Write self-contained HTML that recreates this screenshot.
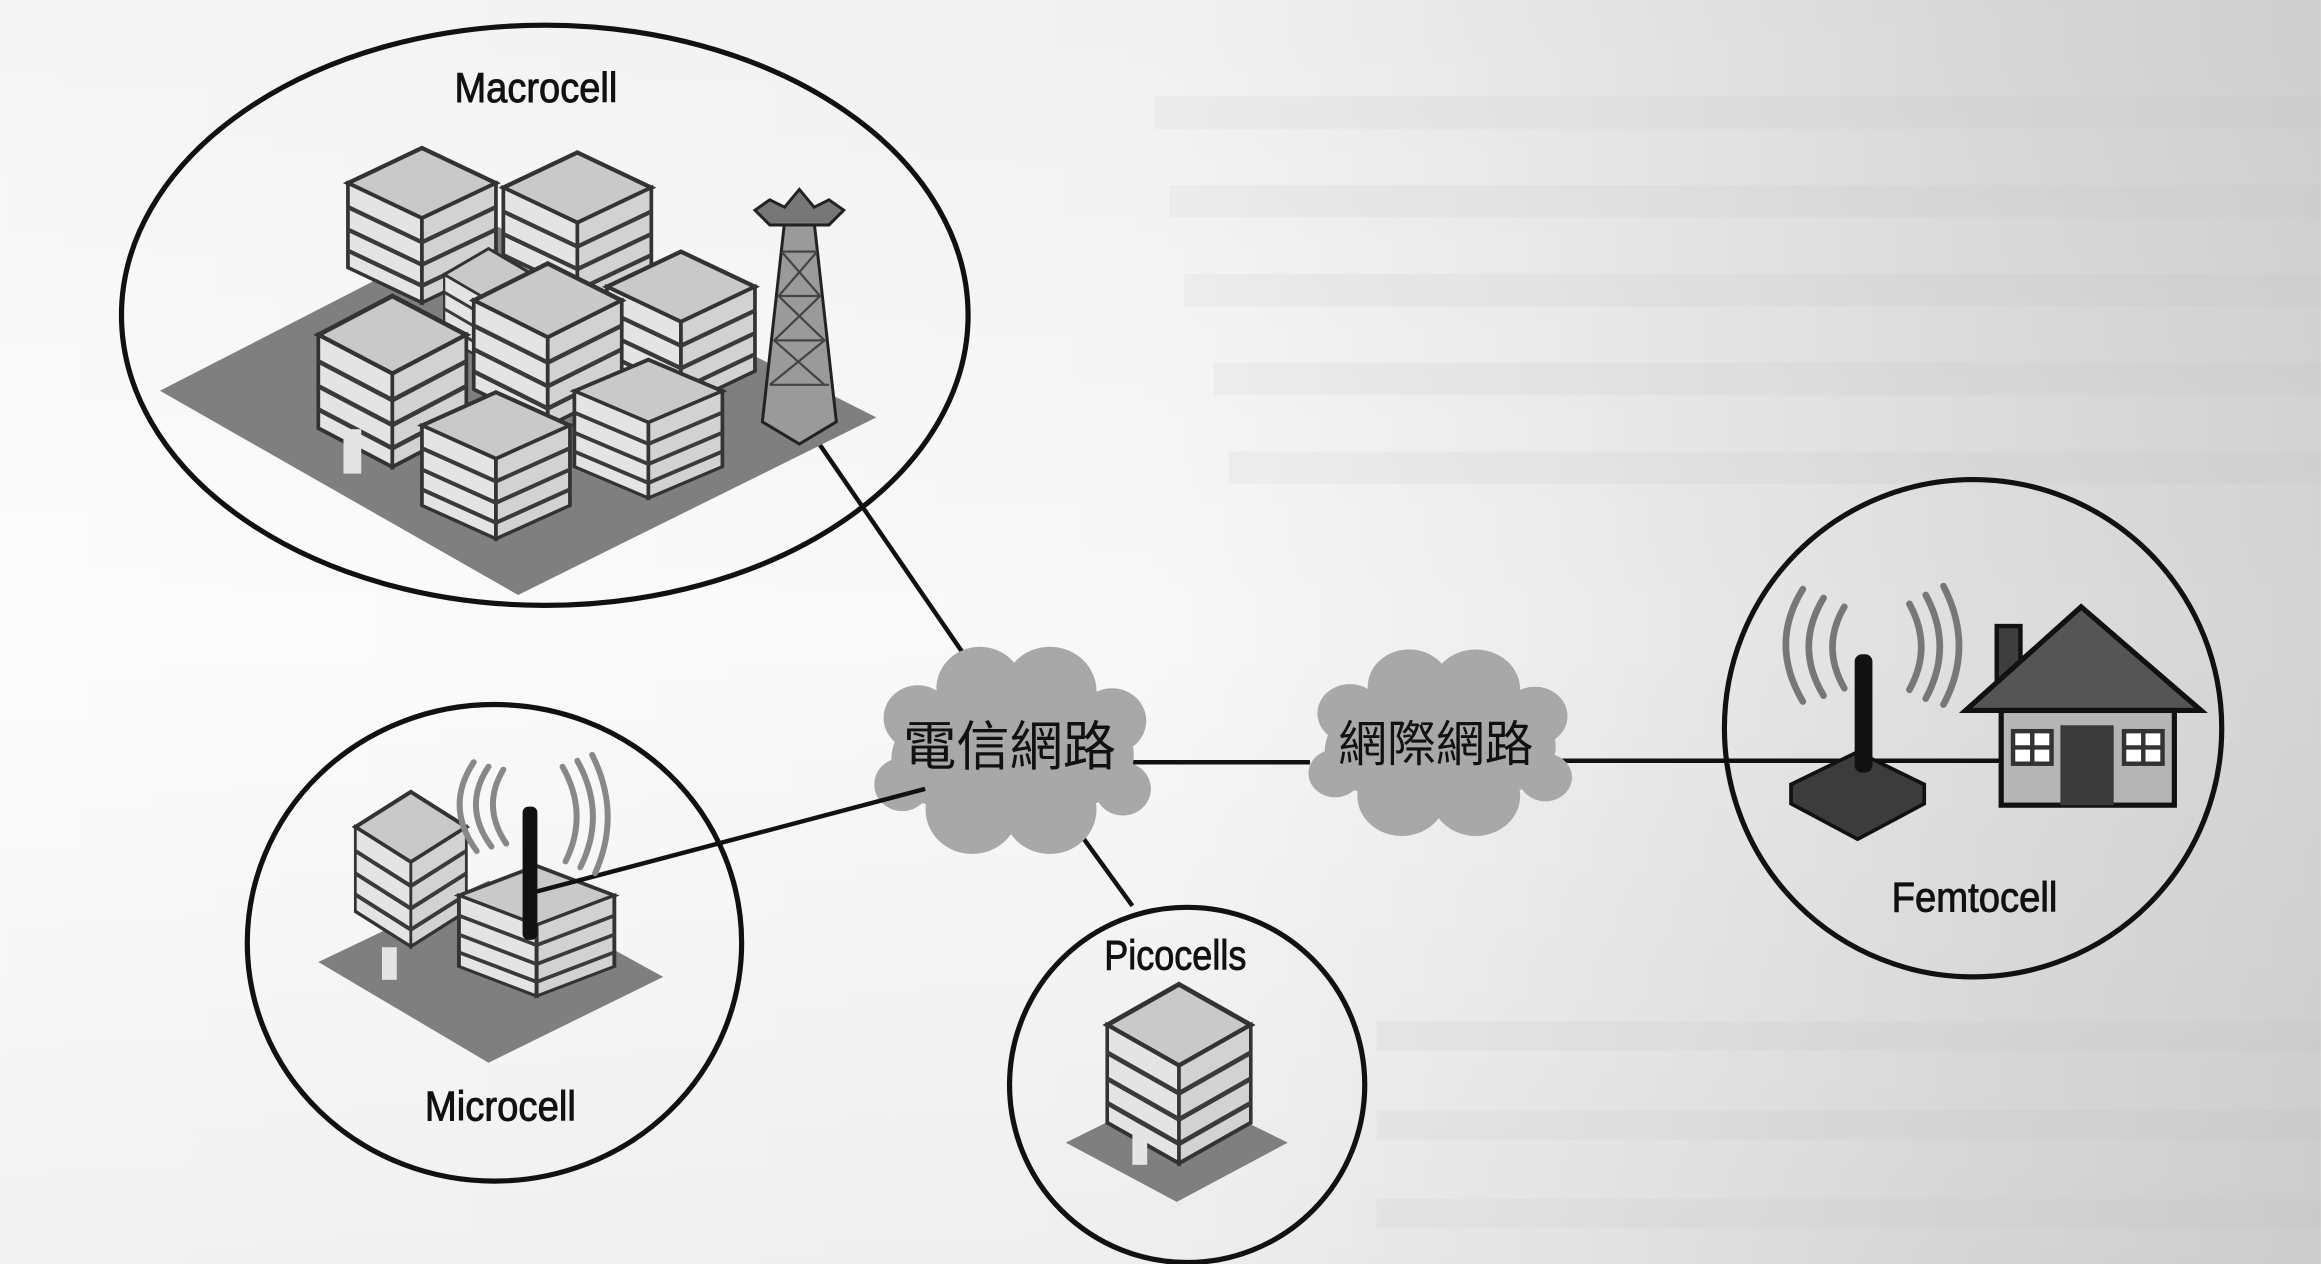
<!DOCTYPE html>
<html><head><meta charset="utf-8"><style>
html,body{margin:0;padding:0;width:2321px;height:1264px;overflow:hidden;background:#fff}
svg{display:block}
</style></head><body>
<svg width="2321" height="1264" viewBox="0 0 1568 854" xmlns="http://www.w3.org/2000/svg">
<defs>
<linearGradient id="bg" x1="0" y1="0" x2="1" y2="0">
<stop offset="0" stop-color="#fcfcfc"/><stop offset="0.5" stop-color="#f8f8f8"/>
<stop offset="0.68" stop-color="#ececec"/><stop offset="0.85" stop-color="#dedede"/><stop offset="1" stop-color="#d4d4d4"/>
</linearGradient>
<linearGradient id="bgv" x1="0" y1="0" x2="0" y2="1">
<stop offset="0" stop-color="#000" stop-opacity="0.03"/><stop offset="0.5" stop-color="#000" stop-opacity="0"/><stop offset="1" stop-color="#000" stop-opacity="0.04"/>
</linearGradient>
<g id="b">
<polygon points="50,0 100,25 50,50 0,25" fill="#c9c9c9" stroke="#333" stroke-width="3"/>
<polygon points="0,25 50,50 50,110 0,85" fill="#e4e4e4" stroke="#333" stroke-width="2.5"/>
<polygon points="50,50 100,25 100,85 50,110" fill="#d2d2d2" stroke="#333" stroke-width="2.5"/>
<g stroke="#3a3a3a" stroke-width="3">
<line x1="0" y1="42" x2="50" y2="67"/><line x1="0" y1="58" x2="50" y2="83"/><line x1="0" y1="73" x2="50" y2="98"/>
<line x1="50" y1="67" x2="100" y2="42"/><line x1="50" y1="83" x2="100" y2="58"/><line x1="50" y1="98" x2="100" y2="73"/>
</g>
</g>
<g id="cloud" fill="#a8a8a8">
<circle cx="0" cy="0" r="38"/><circle cx="-45" cy="8" r="32"/><circle cx="45" cy="5" r="34"/>
<circle cx="-20" cy="-40" r="28"/><circle cx="25" cy="-38" r="30"/><circle cx="-60" cy="-20" r="22"/><circle cx="65" cy="-18" r="22"/>
<circle cx="-25" cy="42" r="30"/><circle cx="25" cy="42" r="30"/><circle cx="-70" cy="25" r="18"/><circle cx="72" cy="28" r="18"/>
</g>
</defs>
<rect width="1568" height="854" fill="url(#bg)"/>
<rect width="1568" height="854" fill="url(#bgv)"/>
<g fill="#bbb" opacity="0.12">
<rect x="780" y="65" width="788" height="22"/><rect x="790" y="125" width="778" height="22"/><rect x="800" y="185" width="768" height="22"/>
<rect x="820" y="245" width="748" height="22"/><rect x="830" y="305" width="738" height="22"/>
<rect x="930" y="690" width="638" height="20"/><rect x="930" y="750" width="638" height="20"/><rect x="930" y="810" width="638" height="20"/>
</g>

<g stroke="#111" stroke-width="3" fill="none">
<line x1="548" y1="292" x2="660" y2="455"/>
<line x1="720" y1="550" x2="765" y2="612"/>
<line x1="760" y1="515" x2="885" y2="515"/>
<line x1="1050" y1="514" x2="1352" y2="514"/>
</g>

<!-- Macrocell -->
<ellipse cx="368" cy="213" rx="286" ry="196" fill="none" stroke="#111" stroke-width="3.5"/>
<text x="362" y="69" font-family="Liberation Sans, sans-serif" font-size="28" text-anchor="middle" textLength="110" lengthAdjust="spacingAndGlyphs" fill="#111" stroke="#111" stroke-width="0.6">Macrocell</text>
<polygon points="108,264 330,150 592,282 350,402" fill="#7f7f7f"/>
<use href="#b" transform="translate(235,100) scale(1,0.95)"/>
<use href="#b" transform="translate(340,103) scale(1,0.95)"/>
<use href="#b" transform="translate(300,168) scale(0.6,0.7)"/>
<use href="#b" transform="translate(410,170) scale(1,0.95)"/>
<use href="#b" transform="translate(320,178) scale(1,1.0)"/>
<use href="#b" transform="translate(215,200) scale(1,1.05)"/>
<use href="#b" transform="translate(388,243) scale(1,0.85)"/>
<use href="#b" transform="translate(285,265) scale(1,0.9)"/>
<rect x="232" y="290" width="12" height="30" fill="#e4e4e4"/>
<g stroke="#222" stroke-width="2" fill="#9a9a9a">
<polygon points="530,150 550,150 565,285 540,300 515,285"/>
<polygon points="510,142 520,135 530,140 540,128 550,140 560,135 570,142 560,152 520,152" fill="#777"/>
<path d="M528,170 L552,170 M526,200 L554,200 M523,230 L557,230 M520,260 L560,260 M528,170 L554,200 L523,230 L557,260 M552,170 L526,200 L557,230 L520,260" fill="none" stroke="#444" stroke-width="1.5"/>
</g>

<!-- Clouds -->
<use href="#cloud" transform="translate(683,505) scale(1.05,1)"/>
<use href="#cloud" transform="translate(972,500) scale(1,0.9)"/>
<text x="682" y="517" font-family="Liberation Sans, 'Noto Sans CJK TC', sans-serif" font-size="36" text-anchor="middle" fill="#111">電信網路</text>
<text x="970" y="514" font-family="Liberation Sans, 'Noto Sans CJK TC', sans-serif" font-size="33" text-anchor="middle" fill="#111">網際網路</text>

<!-- Microcell -->
<ellipse cx="334" cy="637" rx="167" ry="161" fill="none" stroke="#111" stroke-width="3.5"/>
<polygon points="215,650 330,595 448,660 330,718" fill="#7f7f7f"/>
<use href="#b" transform="translate(240,535) scale(0.75,0.95)"/>
<use href="#b" transform="translate(310,585) scale(1.05,0.8)"/>
<rect x="258" y="640" width="10" height="22" fill="#e4e4e4"/>
<line x1="625" y1="533" x2="360" y2="603" stroke="#111" stroke-width="3"/>
<rect x="353" y="545" width="10" height="90" rx="4" fill="#111"/>
<g fill="none" stroke="#888" stroke-width="4" stroke-linecap="round">
<path d="M320,515 Q300,545 322,575"/><path d="M330,518 Q312,545 332,572"/><path d="M340,520 Q325,545 342,570"/>
<path d="M380,518 Q398,550 382,582"/><path d="M390,514 Q410,550 392,586"/><path d="M400,510 Q420,550 402,590"/>
</g>
<text x="338" y="757" font-family="Liberation Sans, sans-serif" font-size="28" text-anchor="middle" textLength="102" lengthAdjust="spacingAndGlyphs" fill="#111" stroke="#111" stroke-width="0.6">Microcell</text>

<!-- Picocells -->
<circle cx="802" cy="733" r="120" fill="none" stroke="#111" stroke-width="3.5"/>
<text x="794" y="655" font-family="Liberation Sans, sans-serif" font-size="28" text-anchor="middle" textLength="96" lengthAdjust="spacingAndGlyphs" fill="#111" stroke="#111" stroke-width="0.6">Picocells</text>
<polygon points="720,772 795,735 870,772 795,812" fill="#7f7f7f"/>
<use href="#b" transform="translate(748,665) scale(0.97,1.1)"/>
<rect x="765" y="765" width="10" height="22" fill="#e4e4e4"/>

<!-- Femtocell -->
<circle cx="1333" cy="492" r="168" fill="none" stroke="#111" stroke-width="3.5"/>
<text x="1334" y="616" font-family="Liberation Sans, sans-serif" font-size="28" text-anchor="middle" textLength="112" lengthAdjust="spacingAndGlyphs" fill="#111" stroke="#111" stroke-width="0.6">Femtocell</text>
<g fill="none" stroke="#777" stroke-width="4.5" stroke-linecap="round">
<path d="M1218,398 Q1195,435 1218,474"/><path d="M1232,404 Q1212,437 1232,470"/><path d="M1246,410 Q1230,437 1246,465"/>
<path d="M1290,408 Q1306,437 1290,466"/><path d="M1301,402 Q1320,437 1301,472"/><path d="M1313,396 Q1334,437 1313,476"/>
</g>
<polygon points="1210,530 1255,508 1300,530 1300,543 1255,567 1210,543" fill="#3c3c3c" stroke="#111" stroke-width="2.5"/>
<rect x="1253" y="442" width="12" height="80" rx="5" fill="#111"/>
<rect x="1349" y="423" width="16" height="40" fill="#3e3e3e" stroke="#111" stroke-width="3"/>
<polygon points="1328,480 1406,410 1487,480" fill="#555" stroke="#111" stroke-width="3.5"/>
<rect x="1352" y="480" width="117" height="64" fill="#b5b5b5" stroke="#111" stroke-width="3.5"/>
<rect x="1392" y="490" width="36" height="54" fill="#3a3a3a"/>
<g fill="#fff" stroke="#333" stroke-width="3">
<rect x="1360" y="494" width="26" height="22"/><rect x="1435" y="494" width="26" height="22"/>
<path d="M1373,494 V516 M1360,505 H1386 M1448,494 V516 M1435,505 H1461" />
</g>
</svg>
</body></html>
